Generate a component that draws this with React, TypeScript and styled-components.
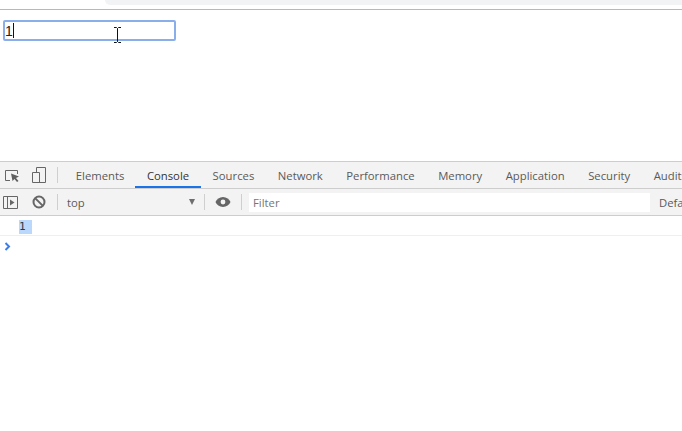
import React from 'react'
import styled, { createGlobalStyle } from 'styled-components'

const GlobalStyle = createGlobalStyle`
  html, body {
    margin: 0;
    padding: 0;
    background: #fff;
    overflow: hidden;
  }
  body {
    font-family: "Open Sans", "Liberation Sans", sans-serif;
  }
`

const Page = styled.div`
  width: 682px;
  height: 431px;
  display: flex;
  flex-direction: column;
  overflow: hidden;
`

const BrowserStrip = styled.div`
  height: 9px;
  flex: none;
  display: flex;
  justify-content: flex-end;
  border-bottom: 1px solid #b8b8b8;
`

const Omnibox = styled.div`
  width: 577px;
  height: 5px;
  background: #f1f3f4;
  border-bottom-left-radius: 8px;
`

const Viewport = styled.div`
  height: 151px;
  flex: none;
  box-sizing: border-box;
  padding: 10px 0 0 3px;
  position: relative;
`

const InputBox = styled.div`
  width: 173px;
  height: 21px;
  box-sizing: border-box;
  border: 2px solid #8aaeea;
  border-radius: 2px;
  display: flex;
  align-items: center;
  font-family: "Liberation Sans", sans-serif;
  font-size: 14px;
  color: #222;
`

const Caret = styled.span`
  width: 1px;
  height: 15px;
  background: #111;
`

const MouseCursor = styled.svg`
  position: absolute;
  left: 113px;
  top: 17px;
`

const Toolbar = styled.div<{ $h: number }>`
  height: ${p => p.$h}px;
  flex: none;
  box-sizing: border-box;
  background: #f3f3f3;
  border-bottom: 1px solid #cdcdcd;
  display: flex;
  align-items: center;
  font-size: 11.3px;
  color: #5a5a5a;
  white-space: nowrap;
`

const TabBar = styled(Toolbar)`
  border-top: 1px solid #cdcdcd;
  align-items: stretch;
`

const IconSlot = styled.div<{ $w: number }>`
  width: ${p => p.$w}px;
  flex: none;
  display: flex;
  align-items: center;
  justify-content: center;
`

const Divider = styled.div<{ $ml?: number; $mr?: number }>`
  width: 1px;
  height: 16px;
  flex: none;
  align-self: center;
  background: #cfcfcf;
  margin: 0 ${p => p.$mr ?? 0}px 0 ${p => p.$ml ?? 0}px;
`

const Tab = styled.div<{ $active?: boolean }>`
  flex: none;
  padding: 0 11.75px;
  margin-left: ${p => (p.$active ? -1 : 0)}px;
  display: flex;
  align-items: center;
  color: ${p => (p.$active ? '#333' : '#5a5a5a')};
  box-shadow: ${p => (p.$active ? 'inset 0 -2px 0 #1a73e8' : 'none')};
`

const ContextSelect = styled.div`
  width: 128px;
  flex: none;
  display: flex;
  align-items: center;
  justify-content: space-between;
`

const Arrow = styled.span`
  width: 0;
  height: 0;
  border-left: 3.5px solid transparent;
  border-right: 3.5px solid transparent;
  border-top: 6px solid #6e6e6e;
`

const FilterInput = styled.div`
  width: 401px;
  height: 19px;
  flex: none;
  padding-left: 4px;
  box-sizing: border-box;
  background: #fff;
  display: flex;
  align-items: center;
  color: #757575;
`

const LevelLabel = styled.span`
  margin-left: 9px;
`

const ConsoleRow = styled.div`
  height: 20px;
  flex: none;
  box-sizing: border-box;
  border-bottom: 1px solid #efefef;
  padding: 4px 0 0 19px;
  display: flex;
  align-items: flex-start;
`

const Selected = styled.span`
  width: 13px;
  height: 14px;
  background: #b9d8fb;
  font-family: "DejaVu Sans Mono", monospace;
  font-size: 11px;
  line-height: 14px;
  color: #303942;
`

const PromptRow = styled.div`
  height: 20px;
  flex: none;
  padding-left: 4px;
  display: flex;
  align-items: center;
`

const tabs = ['Elements', 'Console', 'Sources', 'Network', 'Performance', 'Memory', 'Application', 'Security', 'Audits']

export default function App() {
  return (
    <Page>
      <GlobalStyle />
      <BrowserStrip>
        <Omnibox />
      </BrowserStrip>
      <Viewport>
        <InputBox>
          1
          <Caret />
        </InputBox>
        <MouseCursor width="9" height="16" viewBox="0 0 9 16">
          <path d="M1 .5h2.5l1 1 1-1H8M4.5 1.5v13M1 15.5h2.5l1-1 1 1H8" fill="none" stroke="#111" />
        </MouseCursor>
      </Viewport>
      <TabBar $h={28}>
        <IconSlot $w={25}>
          <svg width="15" height="15" viewBox="0 0 15 15">
            <path d="M5 12.500H.5v-10h12V6" fill="none" stroke="#666" />
            <path d="M6 5.500l8 3-3 1.500 2.500 3-1.500 1-2.500-3L7.500 13z" fill="#5f5f5f" />
          </svg>
        </IconSlot>
        <IconSlot $w={27}>
          <svg width="16" height="16" viewBox="0 0 16 16">
            <path d="M5.500 5.500V.5h9v15h-13v-10h7v10" fill="none" stroke="#666" />
          </svg>
        </IconSlot>
        <Divider $ml={5} $mr={6} />
        {tabs.map(name => (
          <Tab key={name} $active={name === 'Console'}>
            {name}
          </Tab>
        ))}
      </TabBar>
      <Toolbar $h={27}>
        <IconSlot $w={21}>
          <svg width="15" height="13" viewBox="0 0 15 13">
            <path d="M.5.500h14v12H.5zM4.500.5v12" fill="none" stroke="#666" />
            <path d="M7 3.500l4.500 3-4.500 3z" fill="#666" />
          </svg>
        </IconSlot>
        <IconSlot $w={36}>
          <svg width="14" height="14" viewBox="0 0 14 14">
            <circle cx="7" cy="7" r="5.500" fill="none" stroke="#666" strokeWidth="2" />
            <path d="M3.100 3.100l7.800 7.800" stroke="#666" strokeWidth="2" />
          </svg>
        </IconSlot>
        <Divider $mr={9} />
        <ContextSelect>
          top
          <Arrow />
        </ContextSelect>
        <Divider $ml={9} />
        <IconSlot $w={36}>
          <svg width="16" height="12" viewBox="0 0 16 12">
            <path d="M8 1C4.500 1 1.700 3.200.5 6c1.200 2.800 4 5 7.500 5s6.300-2.200 7.500-5C14.300 3.200 11.500 1 8 1z" fill="#666" />
            <circle cx="8" cy="6" r="2.400" fill="#f3f3f3" />
          </svg>
        </IconSlot>
        <Divider $mr={7} />
        <FilterInput>Filter</FilterInput>
        <LevelLabel>Default levels</LevelLabel>
      </Toolbar>
      <ConsoleRow>
        <Selected>1</Selected>
      </ConsoleRow>
      <PromptRow>
        <svg width="7" height="9" viewBox="0 0 7 9">
          <path d="M1.500 1l3.500 3.500L1.500 8" fill="none" stroke="#3b7ded" strokeWidth="2" />
        </svg>
      </PromptRow>
    </Page>
  )
}
